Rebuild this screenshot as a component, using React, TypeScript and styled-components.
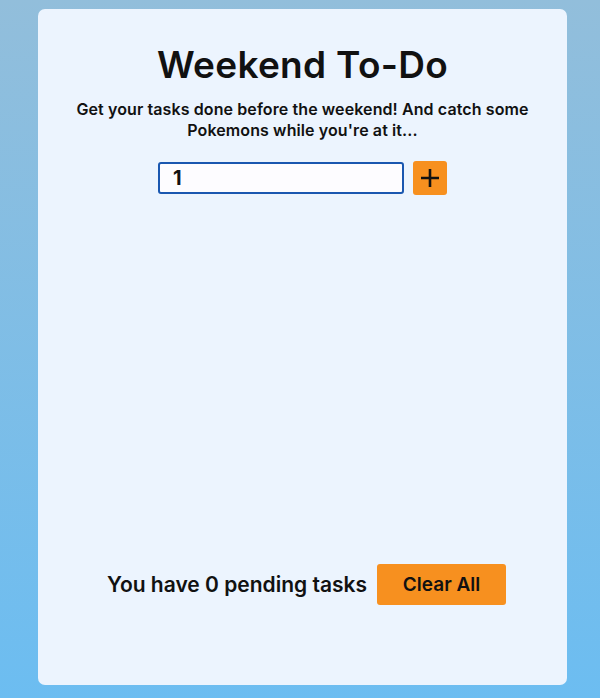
import React, { useState } from "react";
import styled, { createGlobalStyle } from "styled-components";

const Global = createGlobalStyle`
  html, body { margin: 0; padding: 0; }
  body { font-family: "Inter", "Noto Sans", sans-serif; }
`;

const Page = styled.div`
  box-sizing: border-box;
  width: 600px;
  height: 698px;
  padding: 9px 0 0 38px;
  background: linear-gradient(180deg, #92bedb 0%, #6cbdf1 100%);
`;

const Card = styled.main`
  box-sizing: border-box;
  width: 529px;
  height: 676px;
  background: #ecf4fe;
  border-radius: 7px;
  display: flex;
  flex-direction: column;
  align-items: center;
  padding: 33px 20px 80px;
  color: #111;
`;

const Title = styled.h1`
  margin: 0;
  font-size: 37px;
  line-height: 46px;
  font-weight: 600;
  letter-spacing: 0.3px;
`;

const Subtitle = styled.p`
  margin: 11px 0 0;
  font-size: 16px;
  line-height: 21px;
  font-weight: 600;
  letter-spacing: 0.1px;
  text-align: center;
`;

const Form = styled.form`
  display: flex;
  align-items: center;
  gap: 9px;
  margin-top: 20px;
`;

const Input = styled.input`
  box-sizing: border-box;
  width: 246px;
  height: 32px;
  border: 2px solid #1a57b0;
  border-radius: 3px;
  background: #fdfcff;
  padding: 0 13px;
  font-family: inherit;
  font-size: 20px;
  font-weight: 700;
  color: #111;
  outline: none;
  caret-color: #111;
`;

const AddButton = styled.button`
  width: 34px;
  height: 34px;
  border: none;
  border-radius: 3px;
  background: #f7901f;
  display: flex;
  align-items: center;
  justify-content: center;
  padding: 0;
  cursor: pointer;
`;

const Footer = styled.div`
  margin-top: auto;
  display: flex;
  align-items: center;
  gap: 10px;
  padding-left: 8px;
`;

const Pending = styled.span`
  font-size: 21px;
  font-weight: 600;
`;

const ClearButton = styled.button`
  width: 129px;
  height: 41px;
  border: none;
  border-radius: 3px;
  background: #f7901f;
  font-family: inherit;
  font-size: 19px;
  font-weight: 600;
  color: #111;
  cursor: pointer;
`;

export default function App() {
  const [value, setValue] = useState("1");
  return (
    <>
      <Global />
      <Page>
        <Card>
          <Title>Weekend To-Do</Title>
          <Subtitle>
            Get your tasks done before the weekend! And catch some
            <br />
            Pokemons while you're at it...
          </Subtitle>
          <Form onSubmit={(e) => e.preventDefault()}>
            <Input autoFocus value={value} onChange={(e) => setValue(e.target.value)} />
            <AddButton type="submit" aria-label="Add task">
              <svg width="20" height="20" viewBox="0 0 20 20">
                <path d="M10 1v18M1 10h18" stroke="#111" strokeWidth="2.6" />
              </svg>
            </AddButton>
          </Form>
          <Footer>
            <Pending>You have 0 pending tasks</Pending>
            <ClearButton type="button">Clear All</ClearButton>
          </Footer>
        </Card>
      </Page>
    </>
  );
}
